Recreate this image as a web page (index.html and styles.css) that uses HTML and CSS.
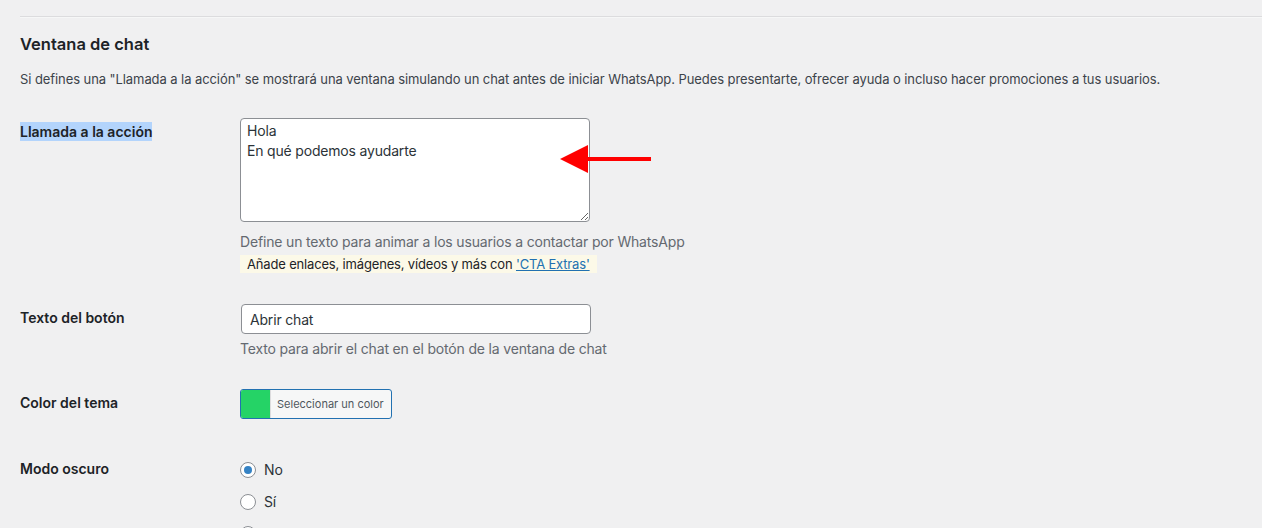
FILE: index.html
```html
<!DOCTYPE html>
<html lang="es">
<head>
<meta charset="utf-8">
<title>Ventana de chat</title>
<link rel="stylesheet" href="styles.css">
</head>
<body>
<div class="wrap">
  <hr class="sep">
  <h2 class="section-title">Ventana de chat</h2>
  <p class="intro">Si defines una "Llamada a la acción" se mostrará una ventana simulando un chat antes de iniciar WhatsApp. Puedes presentarte, ofrecer ayuda o incluso hacer promociones a tus usuarios.</p>

  <div class="form-table">
    <div class="row">
      <div class="th"><span class="selected">Llamada a la acción</span></div>
      <div class="td">
        <div class="textarea-wrap">
          <textarea class="cta" rows="4">Hola
En qué podemos ayudarte</textarea>
          <svg class="arrow" width="92" height="29" viewBox="0 0 92 29" aria-hidden="true">
            <polygon points="0,14 28,0 28,28" fill="#ff0000"/>
            <rect x="27" y="12" width="64" height="4" fill="#ff0000"/>
          </svg>
        </div>
        <p class="description">Define un texto para animar a los usuarios a contactar por WhatsApp</p>
        <p class="extras">Añade enlaces, imágenes, vídeos y más con <a href="#">'CTA Extras'</a></p>
      </div>
    </div>

    <div class="row second-row">
      <div class="th">Texto del botón</div>
      <div class="td">
        <input class="text-input" type="text" value="Abrir chat">
        <p class="description">Texto para abrir el chat en el botón de la ventana de chat</p>
      </div>
    </div>

    <div class="row">
      <div class="th">Color del tema</div>
      <div class="td">
        <button class="color-result" type="button"><span class="swatch"></span><span class="color-text">Seleccionar un color</span></button>
      </div>
    </div>

    <div class="row dark-row">
      <div class="th">Modo oscuro</div>
      <div class="td">
        <div class="radios">
          <label class="radio"><span class="dot checked"></span>No</label>
          <label class="radio"><span class="dot"></span>Sí</label>
          <label class="radio"><span class="dot"></span>Automático según la preferencia del dispositivo</label>
        </div>
      </div>
    </div>
  </div>
</div>
</body>
</html>
```

FILE: styles.css
```css
* { box-sizing: border-box; }

html, body {
  margin: 0;
  padding: 0;
  background: #f0f0f1;
  height: 528px;
  overflow: hidden;
}

body {
  font-family: Inter, "Liberation Sans", sans-serif;
  color: #3c434a;
  font-size: 13px;
  letter-spacing: -0.013em;
}

.wrap {
  padding-left: 20px;
}

.sep {
  margin: 16px 0 0 0;
  border: 0;
  border-top: 1px solid #dcdcde;
  border-bottom: 1px solid #f6f7f7;
  height: 0;
}

.section-title {
  margin: 15px 0 0 0;
  font-size: 16.5px;
  line-height: 22px;
  font-weight: 600;
  color: #1d2327;
  letter-spacing: 0;
}

.intro {
  margin: 14px 0 0 0;
  font-size: 13px;
  line-height: 20px;
  color: #3c434a;
  letter-spacing: -0.08px;
}

.form-table {
  margin-top: 14px;
}

.row {
  display: flex;
  align-items: flex-start;
}

.th {
  width: 210px;
  flex: none;
  padding: 20px 10px 20px 0;
  font-size: 14px;
  line-height: 18px;
  font-weight: 600;
  color: #1d2327;
  letter-spacing: 0;
}

.selected {
  background: #b3d4fc;
  padding: 1px 0;
}

.td {
  padding: 15px 10px;
  font-size: 14px;
  color: #2c3338;
}

.textarea-wrap {
  position: relative;
  width: 350px;
  height: 104px;
}

.cta {
  display: block;
  width: 350px;
  height: 104px;
  margin: 0;
  padding: 2px 6px;
  border: 1px solid #8c8f94;
  border-radius: 4px;
  background: #fff;
  font-family: inherit;
  font-size: 14px;
  line-height: 20px;
  color: #2c3338;
  letter-spacing: -0.013em;
  resize: both;
}

.arrow {
  position: absolute;
  left: 320px;
  top: 27px;
}

.description {
  margin: 9px 0 0 0;
  font-size: 14px;
  line-height: 21px;
  color: #646970;
}

.extras {
  display: inline-block;
  margin: 3px 0 0 0;
  padding: 0 7px;
  background: #fcf9e8;
  font-size: 13px;
  line-height: 18px;
  color: #1d2327;
}

.extras a {
  color: #2271b1;
  text-decoration: underline;
}

.second-row {
  margin-top: 1px;
}

.text-input {
  display: block;
  width: 350px;
  height: 30px;
  margin: 0 0 0 1px;
  padding: 0 8px;
  border: 1px solid #8c8f94;
  border-radius: 4px;
  background: #fff;
  font-family: inherit;
  font-size: 14px;
  color: #2c3338;
  letter-spacing: -0.013em;
}

.row .text-input + .description {
  margin-top: 4px;
}

.color-result {
  display: flex;
  align-items: stretch;
  height: 30px;
  width: 152px;
  margin: 0;
  padding: 0;
  border: 1px solid #2271b1;
  border-radius: 3px;
  background: #f6f7f7;
  overflow: hidden;
  cursor: pointer;
  font-family: inherit;
}

.swatch {
  width: 30px;
  flex: none;
  background: #25d366;
  border-right: 1px solid #dcdcde;
}

.color-text {
  display: flex;
  align-items: center;
  padding: 0 6px;
  font-size: 11px;
  color: #50575e;
  white-space: nowrap;
}

.dark-row {
  margin-top: 6px;
}

.radios {
  display: flex;
  flex-direction: column;
  gap: 16px;
  padding-top: 7px;
}

.radio {
  display: flex;
  align-items: center;
  gap: 8px;
  font-size: 14px;
  line-height: 16px;
  color: #2c3338;
}

.dot {
  width: 16px;
  height: 16px;
  flex: none;
  border: 1px solid #8c8f94;
  border-radius: 50%;
  background: #fff;
  position: relative;
}

.dot.checked::after {
  content: "";
  position: absolute;
  left: 3px;
  top: 3px;
  width: 8px;
  height: 8px;
  border-radius: 50%;
  background: #3582c4;
}
```
